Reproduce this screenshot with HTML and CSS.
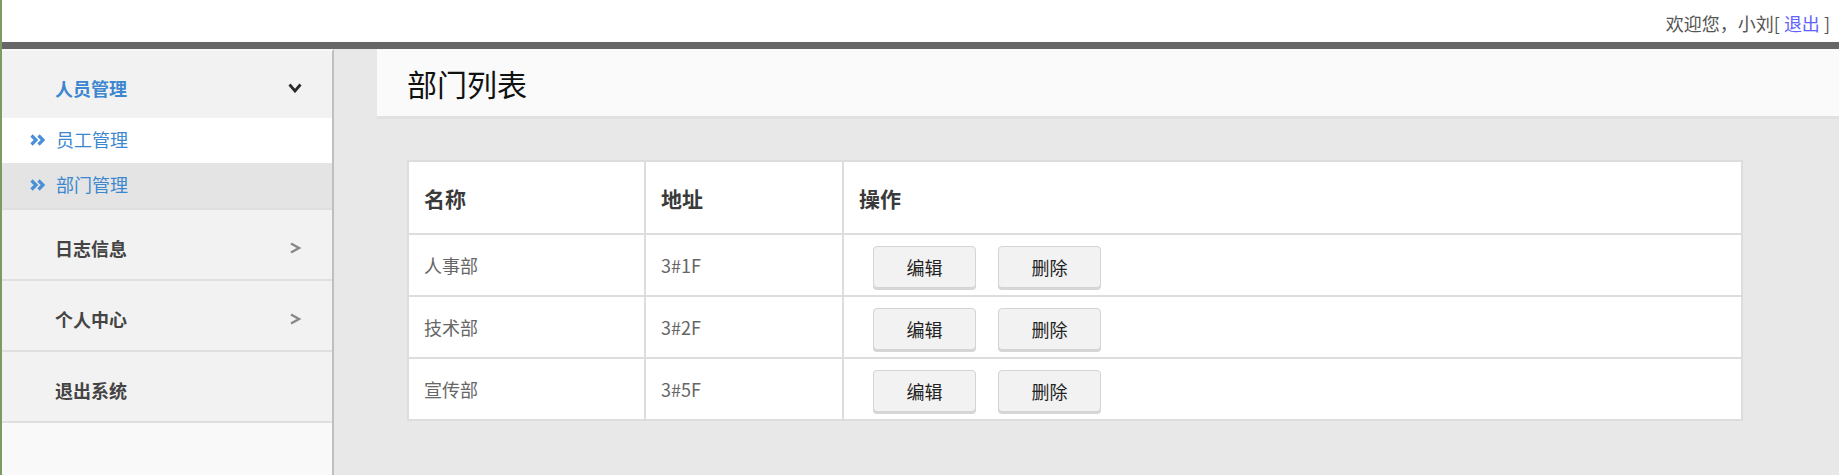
FILE: index.html
```html
<!DOCTYPE html>
<html lang="zh-CN">
<head>
<meta charset="utf-8">
<title>部门列表</title>
<link rel="stylesheet" href="styles.css">
</head>
<body>
<div class="page">
  <header class="topbar">
    <span class="welcome">欢迎您，小刘[ <a class="logout" href="#">退出</a> ]</span>
  </header>
  <div class="main">
    <aside class="sidebar">
      <div class="group">
        <div class="group-head first active">
          <span>人员管理</span>
          <svg class="chev" width="14" height="10" viewBox="0 0 14 10"><polyline points="1.5,1.5 7,8 12.5,1.5" fill="none" stroke="#2b2b2b" stroke-width="2.8"/></svg>
        </div>
        <ul class="submenu">
          <li class="sub-item">
            <svg class="dbl" width="15" height="12" viewBox="0 0 15 12"><polyline points="1.5,1.5 6,6 1.5,10.5" fill="none" stroke="#4a90d9" stroke-width="3.2"/><polyline points="8.5,1.5 13,6 8.5,10.5" fill="none" stroke="#4a90d9" stroke-width="3.2"/></svg>
            <span>员工管理</span>
          </li>
          <li class="sub-item current">
            <svg class="dbl" width="15" height="12" viewBox="0 0 15 12"><polyline points="1.5,1.5 6,6 1.5,10.5" fill="none" stroke="#4a90d9" stroke-width="3.2"/><polyline points="8.5,1.5 13,6 8.5,10.5" fill="none" stroke="#4a90d9" stroke-width="3.2"/></svg>
            <span>部门管理</span>
          </li>
        </ul>
      </div>
      <div class="group">
        <div class="group-head">
          <span>日志信息</span>
          <svg class="chev" width="14" height="12" viewBox="0 0 14 12"><polyline points="3,1.5 11,6 3,10.5" fill="none" stroke="#888" stroke-width="2.4"/></svg>
        </div>
      </div>
      <div class="group">
        <div class="group-head">
          <span>个人中心</span>
          <svg class="chev" width="14" height="12" viewBox="0 0 14 12"><polyline points="3,1.5 11,6 3,10.5" fill="none" stroke="#888" stroke-width="2.4"/></svg>
        </div>
      </div>
      <div class="group">
        <div class="group-head">
          <span>退出系统</span>
        </div>
      </div>
    </aside>
    <section class="content">
      <div class="title-bar"><h1>部门列表</h1></div>
      <div class="table-wrap">
        <table class="data-table">
          <thead>
            <tr><th class="c-name">名称</th><th class="c-addr">地址</th><th>操作</th></tr>
          </thead>
          <tbody>
            <tr><td>人事部</td><td>3#1F</td><td><div class="actions"><button class="btn">编辑</button><button class="btn">删除</button></div></td></tr>
            <tr><td>技术部</td><td>3#2F</td><td><div class="actions"><button class="btn">编辑</button><button class="btn">删除</button></div></td></tr>
            <tr><td>宣传部</td><td>3#5F</td><td><div class="actions"><button class="btn">编辑</button><button class="btn">删除</button></div></td></tr>
          </tbody>
        </table>
      </div>
    </section>
  </div>
</div>
</body>
</html>
```
FILE: styles.css
```css
* { box-sizing: border-box; }
html, body { margin: 0; padding: 0; }
body {
  font-family: "Noto Sans CJK SC", "Microsoft YaHei", sans-serif;
  font-size: 18px;
  color: #555;
  background: #fff;
}
.page {
  border-left: 2px solid #7d9b5f;
  min-height: 100vh;
  display: flex;
  flex-direction: column;
}
.topbar {
  height: 49px;
  background: #fff;
  border-bottom: 7px solid #666;
  display: flex;
  justify-content: flex-end;
  align-items: center;
  padding: 3px 9px 0 0;
}
.welcome { color: #555; line-height: 20px; font-size: 18px; }
.logout { color: #6262ff; text-decoration: none; }

.main { flex: 1; display: flex; }
.sidebar {
  width: 332px;
  flex: none;
  background: #f9f9f9;
  border-right: 2px solid #c4bcc4;
  border-top: 2px solid #f7f7f7;
}
.group {
  background: #f2f2f2;
  border-bottom: 2px solid #dfdfdf;
}
.group-head {
  height: 69px;
  padding: 7px 30px 0 53px;
  display: flex;
  align-items: center;
  justify-content: space-between;
  font-weight: bold;
  font-size: 18px;
  line-height: 20px;
  color: #444;
}
.group-head.first { height: 67px; }
.group-head.active { color: #3c87cf; }
.chev { display: block; }
.submenu { list-style: none; margin: 0; padding: 0; }
.sub-item {
  height: 45px;
  display: flex;
  align-items: center;
  padding: 0 0 3px 28px;
  background: #fff;
  color: #3c87cf;
  font-size: 18px;
  line-height: 20px;
}
.sub-item.current { background: #e4e4e4; }
.dbl { display: block; margin-right: 11px; margin-top: 1px; }

.content { flex: 1; background: #e8e8e8; }
.title-bar {
  margin-left: 43px;
  height: 70px;
  background: #fafafa;
  border-bottom: 3px solid #e1e1e1;
  display: flex;
  align-items: center;
  padding-left: 30px;
}
.title-bar h1 {
  margin: 0;
  font-size: 30px;
  font-weight: normal;
  line-height: 34px;
  color: #111;
}
.table-wrap { padding: 41px 96px 0 73px; }
.data-table {
  width: 100%;
  table-layout: fixed;
  border-collapse: separate;
  border-spacing: 0;
  background: #fff;
  border: 2px solid #ddd;
}
.data-table th, .data-table td {
  border-right: 2px solid #ddd;
  border-bottom: 2px solid #ddd;
  padding: 0 0 0 15px;
  text-align: left;
  vertical-align: middle;
  line-height: 22px;
}
.data-table th:last-child, .data-table td:last-child { border-right: none; }
.data-table tbody tr:last-child td { border-bottom: none; height: 60px; }
.data-table th {
  height: 73px;
  font-weight: bold;
  font-size: 21px;
  color: #3a3a3a;
}
.data-table td { height: 62px; color: #666; }
.c-name { width: 237px; }
.c-addr { width: 198px; }
.actions { display: flex; gap: 22px; padding-left: 14px; margin-top: 4px; }
.btn {
  width: 103px;
  height: 42px;
  background: #f2f2f2;
  border: 1px solid #d4d4d4;
  border-radius: 4px;
  box-shadow: 0 2px 0 #d6d6d6;
  font-family: "Noto Sans CJK SC", "Microsoft YaHei", sans-serif;
  font-size: 18px;
  color: #222;
  padding: 0;
  cursor: pointer;
}
```
